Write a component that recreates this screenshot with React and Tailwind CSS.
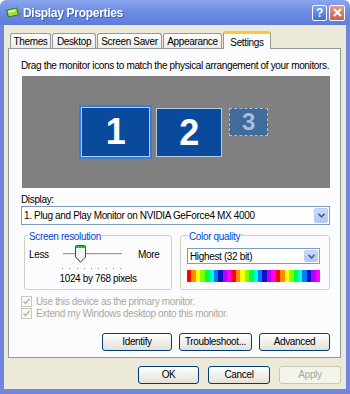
import React from 'react';

const tabs = [
  { label: 'Themes', w: 'w-[41px]' },
  { label: 'Desktop', w: 'w-[44px]' },
  { label: 'Screen Saver', w: 'w-[65px]' },
  { label: 'Appearance', w: 'w-[59px]' },
];

const spectrum = [
  'bg-[#ff0000]', 'bg-[#ff8a00]', 'bg-[#ffff00]', 'bg-[#7cff00]', 'bg-[#00ff3c]', 'bg-[#00ffd8]', 'bg-[#007cff]', 'bg-[#1010c8]', 'bg-[#b400ff]', 'bg-[#ff00ff]',
  'bg-[#ff0000]', 'bg-[#ff8a00]', 'bg-[#ffff00]', 'bg-[#7cff00]', 'bg-[#00ff3c]', 'bg-[#00ffd8]', 'bg-[#007cff]', 'bg-[#1010c8]', 'bg-[#b400ff]', 'bg-[#ff00ff]',
  'bg-[#ff0000]', 'bg-[#ff8a00]', 'bg-[#ffff00]', 'bg-[#7cff00]', 'bg-[#00ff3c]', 'bg-[#00ffd8]', 'bg-[#007cff]', 'bg-[#1010c8]', 'bg-[#b400ff]', 'bg-[#ff00ff]',
];

function XpButton({ children, w, disabled }) {
  return (
    <button
      className={`${w} h-[18px] rounded-[3px] border text-[10px] leading-none bg-gradient-to-b ${disabled
          ? 'border-[#c9c7ba] text-[#aca899] from-[#f5f4ea] to-[#f5f4ea]'
          : 'border-[#003c74] text-black from-white to-[#e3e0d5]'
        }`}
    >
      {children}
    </button>
  );
}

function ComboArrow() {
  return (
    <div className="w-[14px] h-full rounded-[2px] bg-gradient-to-b from-[#c9dafc] to-[#aec8f7] border border-[#b9cdf6] flex items-center justify-center">
      <svg width="7" height="5" viewBox="0 0 7 5">
        <path d="M0.5 0.8 L3.5 3.8 L6.5 0.8" fill="none" stroke="#4d6185" strokeWidth="1.6" />
      </svg>
    </div>
  );
}

function Checkbox({ label }) {
  return (
    <div className="flex items-center h-[12px] gap-[4px]">
      <div className="w-[11px] h-[11px] border border-[#cac8bb] bg-[#f7f7f4] flex items-center justify-center">
        <svg width="7" height="7" viewBox="0 0 7 7">
          <path d="M0.5 3.5 L2.5 5.5 L6.5 1" fill="none" stroke="#b5b2a5" strokeWidth="1.4" />
        </svg>
      </div>
      <span className="text-[10px] text-[#aca899]">{label}</span>
    </div>
  );
}

export default function App() {
  return (
    <div className="w-[350px] h-[394px] flex flex-col font-['Liberation_Sans',Arial,sans-serif] tracking-[-0.35px] select-none">
      {/* Title bar */}
      <div className="h-[25px] shrink-0 flex items-center rounded-t-[6px] bg-gradient-to-b from-[#8aa6ee] via-[#6b8be2] to-[#5d7ddb] pl-[5px] pr-[5px]">
        <svg width="15" height="11" viewBox="0 0 15 11" className="mr-[3px]">
          <path d="M1 3 L12 0.5 L14 8 L3 10.5 Z" fill="#3d6b1f" />
          <path d="M2.3 3.6 L11.4 1.6 L12.8 7.4 L3.7 9.4 Z" fill="#9fdc3a" />
          <path d="M3 4 L10 2.5 L10.6 4.6 L3.5 6.1 Z" fill="#d6f58a" />
        </svg>
        <span className="text-white font-bold text-[12px] tracking-[-0.3px] drop-shadow-[1px_1px_0_#3b5bb5]">Display Properties</span>
        <div className="ml-auto flex gap-[2px]">
          <div className="w-[15px] h-[16px] rounded-[2px] border border-white bg-gradient-to-b from-[#7ea1f0] to-[#3f6fdc] flex items-center justify-center text-white font-bold text-[12px] leading-none">?</div>
          <div className="w-[16px] h-[16px] rounded-[2px] border border-white bg-gradient-to-b from-[#e59a8a] to-[#c9604a] flex items-center justify-center">
            <svg width="9" height="9" viewBox="0 0 9 9">
              <path d="M1 1 L8 8 M8 1 L1 8" stroke="white" strokeWidth="2" />
            </svg>
          </div>
        </div>
      </div>

      {/* Body */}
      <div className="flex-1 flex flex-col bg-[#ece9d8] border-l-4 border-r-4 border-b-[5px] border-[#7186e0] pl-[4px] pr-[5px] pt-[6px] pb-[5px]">
        {/* Tabs */}
        <div className="h-[17px] flex items-end pl-[2px] gap-[1px] relative z-10">
          {tabs.map((t) => (
            <div
              key={t.label}
              className={`${t.w} h-[15px] rounded-t-[3px] border border-b-0 border-[#919b9c] bg-gradient-to-b from-white to-[#ecebe5] flex items-center justify-center text-[10px] text-black`}
            >
              {t.label}
            </div>
          ))}
          <div className="w-[48px] h-[18px] -mb-px rounded-t-[3px] border border-b-0 border-[#919b9c] border-t-[3px] border-t-[#ffc83c] bg-[#fcfcfe] flex items-start pt-[1px] justify-center text-[10px] text-black">
            Settings
          </div>
        </div>

        {/* Tab panel */}
        <div className="border border-[#919b9c] bg-[#fcfcfe] pl-[12px] pr-[10px] pt-[10px] pb-[6px] flex flex-col">
          <p className="text-[10px] leading-[13px] text-black whitespace-nowrap">
            Drag the monitor icons to match the physical arrangement of your monitors.
          </p>

          {/* Monitor arrangement canvas */}
          <div className="mt-[4px] ml-px h-[112px] bg-[#808080] relative">
            <div className="absolute left-[57px] top-[29px] w-[73px] h-[54px] bg-[#3a7ad8] p-[2px]">
              <div className="w-full h-full border border-[#a8d4fa] bg-[#0a4a9c] flex items-center justify-center text-white font-bold text-[36px] leading-none">
                1
              </div>
            </div>
            <div className="absolute left-[134px] top-[32px] w-[66px] h-[49px] border border-[#b8cde6] bg-[#0a4a9c] flex items-center justify-center text-white font-bold text-[36px] leading-none">
              2
            </div>
            <div className="absolute left-[207px] top-[32px] w-[39px] h-[28px] border border-dashed border-[#a9bcd6] bg-[#3f6b9d] flex items-center justify-center text-[#a9bcd8] font-bold text-[24px] leading-none">
              3
            </div>
          </div>

          {/* Display combo */}
          <p className="mt-[6px] text-[10px] leading-[12px] text-black">Display:</p>
          <div className="h-[19px] border border-[#7f9db9] bg-white flex items-center pl-[2px] pr-px py-px">
            <span className="flex-1 text-[10px] text-black">1. Plug and Play Monitor on NVIDIA GeForce4 MX 4000</span>
            <ComboArrow />
          </div>

          {/* Group boxes */}
          <div className="mt-[10px] flex gap-[8px] pl-[3px]">
            <div className="relative w-[148px] h-[55px] rounded-[3px] border border-[#d0d0bf] pt-[9px]">
              <span className="absolute -top-[7px] left-[3px] px-px bg-[#fcfcfe] text-[10px] text-[#0046d5]">Screen resolution</span>
              <div className="flex items-center pl-[4px]">
                <span className="w-[34px] text-[10px] text-black">Less</span>
                <div className="relative w-[59px] h-[18px]">
                  <div className="absolute left-0 right-0 top-[8px] h-[3px] border-t border-[#9d9c99] border-b border-b-white bg-[#e3e2dc]" />
                  <svg className="absolute left-[12px] top-0" width="11" height="18" viewBox="0 0 11 18">
                    <path d="M0.5 1.5 Q0.5 0.5 1.5 0.5 L9.5 0.5 Q10.5 0.5 10.5 1.5 L10.5 12 L5.5 17.3 L0.5 12 Z" fill="#f4f3ee" stroke="#1c5180" />
                    <rect x="1" y="1" width="9" height="2" fill="#21c13a" />
                    <path d="M1.2 12.3 L5.5 16.6" stroke="#21c13a" strokeWidth="1" />
                  </svg>
                </div>
                <span className="ml-[16px] text-[10px] text-black">More</span>
              </div>
              <div className="mt-[5px] ml-[37px] w-[59px] flex justify-between">
                {[0, 1, 2, 3, 4, 5, 6, 7, 8].map((i) => (
                  <div key={i} className="w-px h-px bg-[#8a8a8a]" />
                ))}
              </div>
              <p className="mt-[4px] text-center text-[10px] leading-[12px] text-black">1024 by 768 pixels</p>
            </div>

            <div className="relative w-[150px] h-[55px] rounded-[3px] border border-[#d0d0bf] pt-[12px] pl-[6px] pr-[9px]">
              <span className="absolute -top-[7px] left-[7px] px-px bg-[#fcfcfe] text-[10px] text-[#0046d5]">Color quality</span>
              <div className="h-[16px] border border-[#7f9db9] bg-white flex items-center pl-[2px] pr-px py-px">
                <span className="flex-1 text-[10px] text-black">Highest (32 bit)</span>
                <ComboArrow />
              </div>
              <div className="mt-[6px] h-[12px] flex">
                {spectrum.map((c, i) => (
                  <div key={i} className={`flex-1 ${c}`} />
                ))}
              </div>
            </div>
          </div>

          {/* Checkboxes */}
          <div className="mt-[5px] flex flex-col">
            <Checkbox label="Use this device as the primary monitor." />
            <Checkbox label="Extend my Windows desktop onto this monitor." />
          </div>

          {/* Panel buttons */}
          <div className="mt-[14px] flex justify-end gap-[7px]">
            <XpButton w="w-[70px]">Identify</XpButton>
            <XpButton w="w-[73px]">Troubleshoot...</XpButton>
            <XpButton w="w-[71px]">Advanced</XpButton>
          </div>
        </div>

        {/* Dialog buttons */}
        <div className="mt-[8px] flex justify-end gap-[9px]">
          <XpButton w="w-[61px]">OK</XpButton>
          <XpButton w="w-[62px]">Cancel</XpButton>
          <XpButton w="w-[62px]" disabled>Apply</XpButton>
        </div>
      </div>
    </div>
  );
}
